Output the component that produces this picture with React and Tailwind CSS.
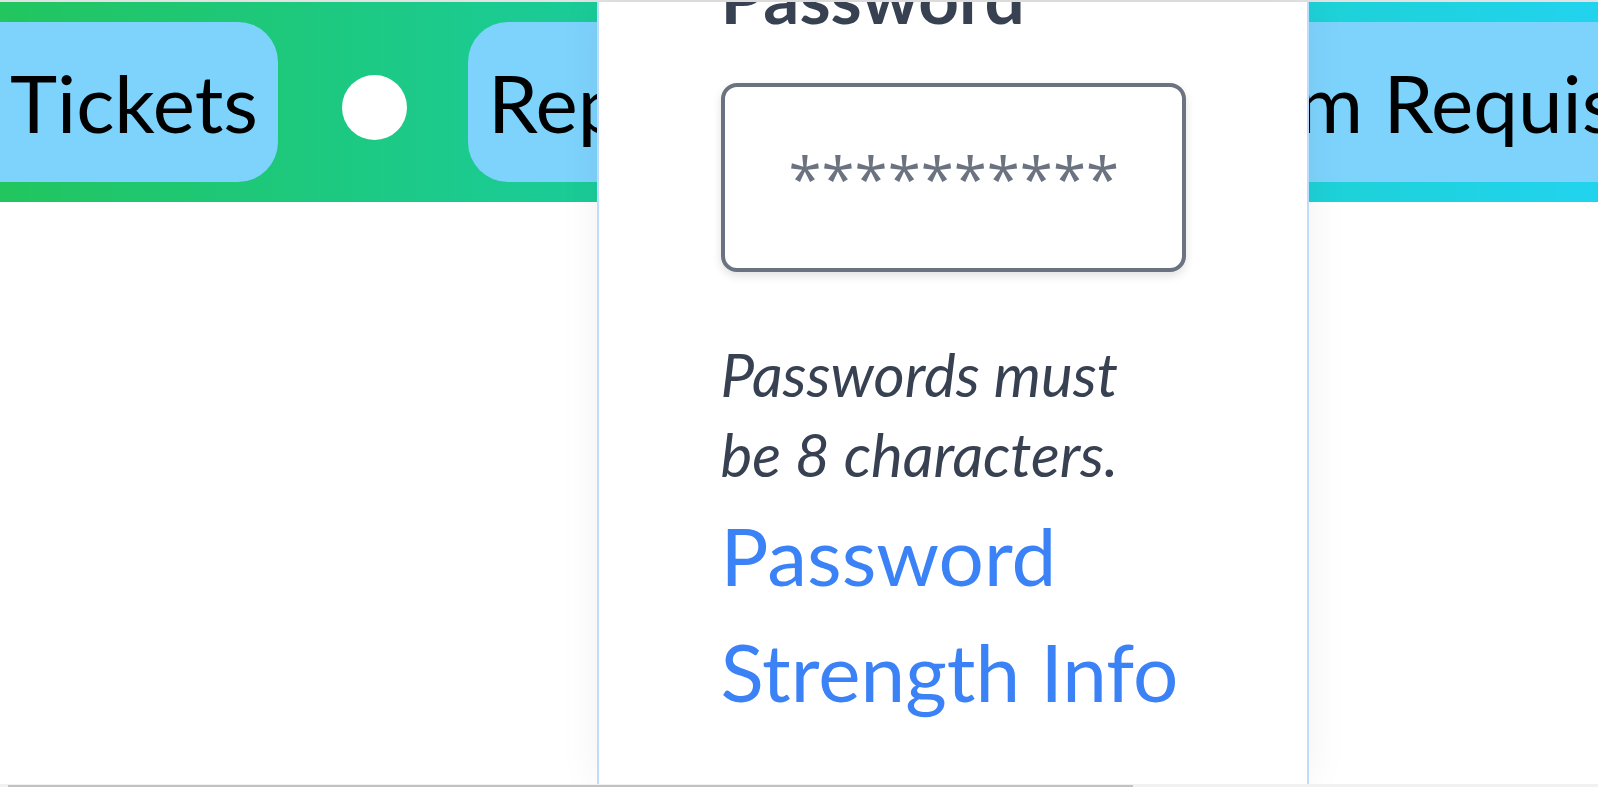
import React from 'react';

const Pill = ({ children }) => (
  <div className="shrink-0 h-[160px] flex items-center px-5 rounded-[40px] bg-[#7dd3fc] text-black text-[80px] leading-none whitespace-nowrap">
    {children}
  </div>
);

const Dot = () => (
  <div className="shrink-0 w-[65px] h-[65px] mt-[11px] ml-[64px] mr-[61px] rounded-full bg-white" />
);

const App = () => {
  return (
    <div className="relative w-[1598px] h-[787px] overflow-hidden bg-white font-['Lato','Open_Sans',sans-serif]">
      <div className="h-[2px] bg-[#e2e2e2]" />

      <nav className="flex items-center h-[200px] bg-linear-to-r from-[#22c55e] to-[#22d3ee] overflow-hidden">
        <div className="shrink-0 w-[278px] flex justify-end">
          <Pill>My Tickets</Pill>
        </div>
        <Dot />
        <Pill>Reports</Pill>
        <Dot />
        <Pill>Stock Item Requisitions</Pill>
      </nav>

      {/* password modal panel */}
      <div className="absolute top-[2px] bottom-[3px] left-[597px] w-[712px] bg-white border-x-2 border-[#bfdbfe] shadow-[0_0_40px_rgba(0,0,0,0.06)] overflow-hidden">
        <div className="w-[465px] mx-auto mt-[-41px]">
          <h2 className="text-[71px] leading-none font-bold text-[#374151]">Password</h2>
          <input
            type="password"
            placeholder="************************"
            className="block mt-[51px] w-[465px] h-[189px] px-[64px] border-4 border-[#6b7280] rounded-2xl bg-white shadow-[0_4px_10px_rgba(0,0,0,0.12)] font-['Open_Sans',sans-serif] text-[60px] text-[#374151] placeholder:text-[#6b7280] outline-none"
          />
          <p className="mt-[62px] text-[60px] leading-[80px] italic text-[#374151]">
            Passwords must be 8 characters.
          </p>
          <a href="#" className="block mt-[3px] text-[80px] leading-[116px] text-[#3b82f6]">
            Password Strength Info
          </a>
        </div>
      </div>

      {/* horizontal scrollbar */}
      <div className="absolute left-0 right-0 bottom-0 h-[3px] bg-[#f1f1f1]">
        <div className="mt-[1px] ml-[8px] w-[1125px] h-[2px] bg-[#c1c1c1]" />
      </div>
    </div>
  );
};

export default App;
